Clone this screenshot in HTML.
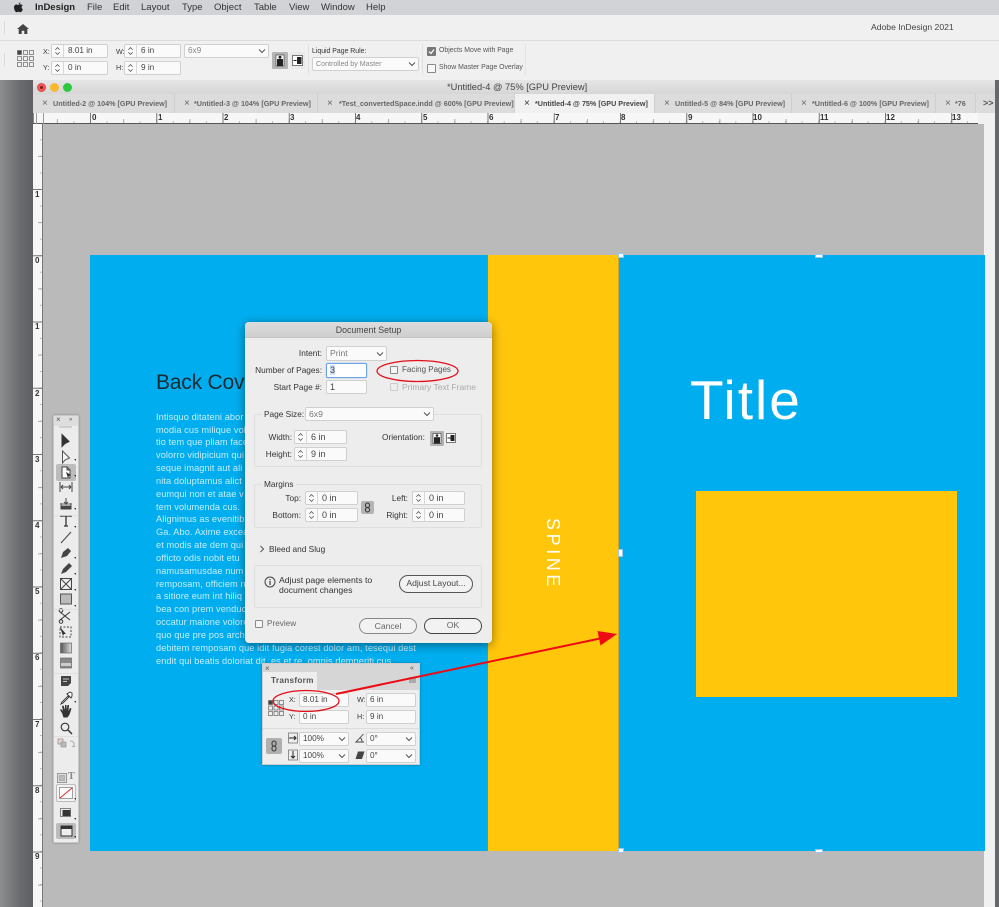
<!DOCTYPE html>
<html><head><meta charset="utf-8"><style>
html,body{margin:0;padding:0;width:999px;height:907px;overflow:hidden;background:#6b6c6f;font-family:"Liberation Sans",sans-serif;color:#333}
div,span,svg{position:absolute;box-sizing:border-box}
.t{white-space:nowrap;font-size:8.2px;line-height:12px;color:#3a3a3a}
.r{text-align:right}
.f{background:#fafafa;border:1px solid #d0d0d0;border-radius:2px;font-size:8.2px;line-height:12px;color:#444;white-space:nowrap;padding-left:3px}
.s{padding-left:16px}
.s svg{left:0;top:0;width:12px;height:100%;border-right:1px solid #d8d8d8}
.d svg{right:2px;top:50%;margin-top:-4px;width:8px;height:8px}
.tab{top:94px;height:19px;background:#dcdcdc;border-right:1px solid #cfcfcf;font-size:7.2px;line-height:19px;color:#666;font-weight:bold;white-space:nowrap;overflow:hidden}
.tab b{position:absolute;left:9px;top:0;font-weight:normal;font-size:10px;color:#666}
.tab i{position:absolute;font-style:normal}
.rl{font-size:8px;font-weight:bold;color:#333;line-height:9px;white-space:nowrap}
.g{border:1px solid #dedede;border-radius:2px}
.dl{font-size:8.3px;line-height:12px;color:#333;white-space:nowrap;font-weight:normal}
.pill{border:1px solid #777;border-radius:9px;background:#f2f2f2;font-size:8.6px;text-align:center;color:#444;white-space:nowrap}
.b{left:156px;font-size:9.2px;line-height:13px;color:#c6edfb;white-space:nowrap;letter-spacing:.1px}
.m{top:2px;font-size:9.5px;color:#333}
</style></head><body>
<svg width="0" height="0" style="position:absolute"><defs>
<symbol id="sp" viewBox="0 0 12 14"><path d="M3.500 5.500 6 3l2.500 2.500M3.500 8.500 6 11l2.500-2.500" fill="none" stroke="#555" stroke-width=".9"/></symbol>
<symbol id="dn" viewBox="0 0 8 8"><path d="M1 2.500 4 5.500l3-3" fill="none" stroke="#555" stroke-width="1"/></symbol>
</defs></svg>

<!-- menu bar -->
<div style="left:0;top:0;width:999px;height:15px;background:#d2d3d6"></div>
<svg style="left:13px;top:2px" width="11" height="11" viewBox="0 0 11 11"><path d="M7.300 0.500C6.200 0.700 5.500 1.600 5.600 2.600 6.700 2.600 7.400 1.600 7.300 .5zM5.500 3C4.700 3 4.300 2.500 3.400 2.500 2 2.500 1 3.800 1 5.500 1 7.700 2.500 10.300 3.600 10.300 4.300 10.300 4.600 9.800 5.500 9.800S6.700 10.300 7.400 10.300C8.300 10.300 9.500 8.500 9.900 7.300 8.300 6.600 8.200 4.200 9.700 3.400 9.100 2.700 8.300 2.400 7.600 2.400 6.700 2.400 6.100 3 5.500 3z" fill="#222"/></svg>
<div class="t" style="left:35px;top:2px;font-size:9.500px;font-weight:bold;color:#222">InDesign</div>
<div class="t m" style="left:87px">File</div>
<div class="t m" style="left:113px">Edit</div>
<div class="t m" style="left:141px">Layout</div>
<div class="t m" style="left:182px">Type</div>
<div class="t m" style="left:214px">Object</div>
<div class="t m" style="left:254px">Table</div>
<div class="t m" style="left:289px">View</div>
<div class="t m" style="left:321px">Window</div>
<div class="t m" style="left:366px">Help</div>

<!-- home bar -->
<div style="left:0;top:15px;width:999px;height:65px;background:#f0f0f0"></div>
<div style="left:0;top:40px;width:999px;height:1px;background:#dcdcdc"></div>
<div style="left:4px;top:21px;width:1px;height:13px;background:#d8d8d8"></div>
<svg style="left:17px;top:24px" width="12" height="10" viewBox="0 0 12 10"><path d="M6 0 0 5h1.700v5h3V6.800h2.600V10h3V5H12z" fill="#444"/></svg>
<div class="t" style="left:871px;top:21px;font-size:8.600px;color:#444">Adobe InDesign 2021</div>

<!-- control bar -->
<div style="left:4px;top:53px;width:1px;height:13px;background:#d8d8d8"></div>
<svg style="left:17px;top:50px" width="18" height="18" viewBox="0 0 18 18" fill="none" stroke="#666" stroke-width=".7"><rect x=".5" y=".5" width="4" height="4" fill="#444"/><rect x="6.500" y=".5" width="4" height="4"/><rect x="12.500" y=".5" width="4" height="4"/><rect x=".5" y="6.500" width="4" height="4"/><rect x="6.500" y="6.500" width="4" height="4"/><rect x="12.500" y="6.500" width="4" height="4"/><rect x=".5" y="12.500" width="4" height="4"/><rect x="6.500" y="12.500" width="4" height="4"/><rect x="12.500" y="12.500" width="4" height="4"/></svg>
<div class="t" style="left:43px;top:46px;font-size:7.200px">X:</div>
<div class="t" style="left:43px;top:62px;font-size:7.200px">Y:</div>
<div class="t" style="left:116px;top:46px;font-size:7.200px">W:</div>
<div class="t" style="left:116px;top:62px;font-size:7.200px">H:</div>
<div class="f s" style="left:51px;top:44px;width:57px;height:14px">8.01 in<svg><use href="#sp"/></svg></div>
<div class="f s" style="left:51px;top:61px;width:57px;height:14px">0 in<svg><use href="#sp"/></svg></div>
<div class="f s" style="left:124px;top:44px;width:57px;height:14px">6 in<svg><use href="#sp"/></svg></div>
<div class="f s" style="left:124px;top:61px;width:57px;height:14px">9 in<svg><use href="#sp"/></svg></div>
<div class="f d" style="left:184px;top:44px;width:85px;height:14px;color:#888">6x9<svg><use href="#dn"/></svg></div>
<div style="left:272px;top:52px;width:16px;height:17px;background:#b4b4b4;border-radius:1px"></div>
<svg style="left:275px;top:54px" width="10" height="13" viewBox="0 0 10 13"><rect x="1" y="1" width="8" height="11" fill="#fff" stroke="#333" stroke-width=".6"/><circle cx="5" cy="3.200" r="1.500" fill="#222"/><rect x="2" y="5" width="6" height="7" fill="#222"/></svg>
<div style="left:290px;top:52px;width:15px;height:17px;background:#eaeaea"></div>
<svg style="left:292px;top:55px" width="11" height="11" viewBox="0 0 11 11"><rect x=".5" y=".5" width="10" height="10" fill="#fff" stroke="#444" stroke-width=".7"/><rect x="5" y="2" width="4.500" height="7" fill="#222"/><path d="M1.500 5.500h3" stroke="#222"/></svg>
<div style="left:308px;top:44px;width:1px;height:31px;background:#e2e2e2"></div>
<div class="t" style="left:312px;top:46px;font-size:6.900px;color:#333">Liquid Page Rule:</div>
<div class="f d" style="left:312px;top:57px;width:107px;height:14px;color:#888;font-size:7.100px">Controlled by Master<svg><use href="#dn"/></svg></div>
<div style="left:422px;top:44px;width:1px;height:31px;background:#e2e2e2"></div>
<div style="left:427px;top:47px;width:9px;height:9px;background:#777;border-radius:1px"></div>
<svg style="left:428px;top:48px" width="7" height="7" viewBox="0 0 7 7"><path d="M1 3.500 3 5.500 6 1.500" fill="none" stroke="#fff" stroke-width="1.200"/></svg>
<div class="t" style="left:439px;top:45px;font-size:6.900px;color:#555">Objects Move with Page</div>
<div style="left:427px;top:64px;width:9px;height:9px;background:#f8f8f8;border:1px solid #888;border-radius:1px"></div>
<div class="t" style="left:439px;top:62px;font-size:6.900px;color:#555">Show Master Page Overlay</div>
<div style="left:525px;top:44px;width:1px;height:31px;background:#e2e2e2"></div>

<!-- left dark desktop + window -->
<div style="left:0;top:80px;width:33px;height:827px;background:linear-gradient(90deg,#8d8e90,#6a6b6e 60%,#5f6063)"></div>
<div style="left:995px;top:80px;width:4px;height:827px;background:#67686b"></div>
<div style="left:33px;top:80px;width:962px;height:14px;background:linear-gradient(#e6e6e6,#d6d6d6)"></div>
<div style="left:37px;top:83px;width:9px;height:9px;border-radius:50%;background:#f4575a;border:1px solid #d84a48"></div>
<div style="left:40px;top:86px;width:3px;height:3px;border-radius:50%;background:#7a1e1c"></div>
<div style="left:50px;top:83px;width:9px;height:9px;border-radius:50%;background:#f9b92e"></div>
<div style="left:63px;top:83px;width:9px;height:9px;border-radius:50%;background:#2bc840"></div>
<div class="t" style="left:447px;top:81px;font-size:9.300px;color:#444">*Untitled-4 @ 75% [GPU Preview]</div>

<!-- tabs -->
<div style="left:33px;top:94px;width:962px;height:19px;background:#dcdcdc"></div>
<div class="tab" style="left:33px;width:142px"><b>×</b><i style="left:20px">Untitled-2 @ 104% [GPU Preview]</i></div>
<div class="tab" style="left:175px;width:143px"><b style="left:9px">×</b><i style="left:19px">*Untitled-3 @ 104% [GPU Preview]</i></div>
<div class="tab" style="left:318px;width:197px"><b>×</b><i style="left:21px">*Test_convertedSpace.indd @ 600% [GPU Preview]</i></div>
<div class="tab" style="left:515px;width:140px;background:#f1f1f1;color:#444"><b style="color:#333">×</b><i style="left:20px">*Untitled-4 @ 75% [GPU Preview]</i></div>
<div class="tab" style="left:655px;width:137px"><b>×</b><i style="left:20px">Untitled-5 @ 84% [GPU Preview]</i></div>
<div class="tab" style="left:792px;width:144px"><b>×</b><i style="left:20px">*Untitled-6 @ 100% [GPU Preview]</i></div>
<div class="tab" style="left:936px;width:40px"><b>×</b><i style="left:19px">*76</i></div>
<div class="t" style="left:983px;top:97px;font-size:9px;font-weight:bold;color:#555">&gt;&gt;</div>

<!-- rulers -->
<div style="left:33px;top:113px;width:962px;height:794px;background:#f1f1f1"></div>
<div style="left:33px;top:113px;width:945px;height:11px;background:#f7f7f7;border-bottom:1px solid #555"></div>
<div style="left:43px;top:113px;width:935px;height:10px;background-image:linear-gradient(90deg,#777 1px,transparent 1px),linear-gradient(90deg,#aaa 1px,transparent 1px),linear-gradient(90deg,#bbb 1px,transparent 1px);background-size:66.25px 10px,33.125px 4px,16.562px 2px;background-position:47px 0,47px 100%,47px 100%;background-repeat:repeat-x"></div>
<div style="left:33px;top:113px;width:1px;height:10px;background:#888"></div>
<div style="left:36px;top:113px;width:1px;height:11px;background:#999"></div>
<div style="left:43px;top:113px;width:1px;height:11px;background:#999"></div>
<div class="rl" style="left:92px;top:113px">0</div>
<div class="rl" style="left:158px;top:113px">1</div>
<div class="rl" style="left:224px;top:113px">2</div>
<div class="rl" style="left:290px;top:113px">3</div>
<div class="rl" style="left:356px;top:113px">4</div>
<div class="rl" style="left:423px;top:113px">5</div>
<div class="rl" style="left:489px;top:113px">6</div>
<div class="rl" style="left:555px;top:113px">7</div>
<div class="rl" style="left:621px;top:113px">8</div>
<div class="rl" style="left:688px;top:113px">9</div>
<div class="rl" style="left:753px;top:113px">10</div>
<div class="rl" style="left:820px;top:113px">11</div>
<div class="rl" style="left:886px;top:113px">12</div>
<div class="rl" style="left:952px;top:113px">13</div>
<div style="left:33px;top:124px;width:10px;height:783px;background-color:#f7f7f7;border-right:1px solid #777;background-image:linear-gradient(#777 1px,transparent 1px),linear-gradient(#aaa 1px,transparent 1px),linear-gradient(#bbb 1px,transparent 1px);background-size:10px 66.25px,4px 33.125px,2px 16.562px;background-position:0 65px,100% 65px,100% 65px;background-repeat:repeat-y"></div>
<div class="rl" style="left:35px;top:190px">1</div>
<div class="rl" style="left:35px;top:256px">0</div>
<div class="rl" style="left:35px;top:322px">1</div>
<div class="rl" style="left:35px;top:389px">2</div>
<div class="rl" style="left:35px;top:455px">3</div>
<div class="rl" style="left:35px;top:521px">4</div>
<div class="rl" style="left:35px;top:587px">5</div>
<div class="rl" style="left:35px;top:653px">6</div>
<div class="rl" style="left:35px;top:720px">7</div>
<div class="rl" style="left:35px;top:786px">8</div>
<div class="rl" style="left:35px;top:852px">9</div>

<!-- canvas -->
<div style="left:43px;top:124px;width:941px;height:783px;background:#bababa"></div>
<div style="left:90px;top:255px;width:895px;height:596px;background:#00aeef"></div>
<div style="left:487px;top:255px;width:132px;height:596px;background:#ffc60b;border-left:1px solid #a08a30;border-right:1px solid #d8a520"></div>
<div style="left:696px;top:491px;width:261px;height:206px;background:#ffc60b"></div>
<div class="t" style="left:690px;top:368px;font-size:55px;line-height:64px;color:#fff;letter-spacing:2px">Title</div>
<div class="t" style="left:510px;top:545px;width:86px;text-align:center;transform:rotate(90deg);font-size:18px;line-height:18px;color:#fff;letter-spacing:3.600px">SPINE</div>
<div class="t" style="left:156px;top:369px;font-size:21px;line-height:28px;color:#1d2a33;letter-spacing:-.2px">Back Cover</div>
<div class="b" style="top:411px">Intisquo ditateni abor</div>
<div class="b" style="top:424px">modia cus milique vol</div>
<div class="b" style="top:436px">tio tem que pliam face</div>
<div class="b" style="top:449px">volorro vidipicium qui</div>
<div class="b" style="top:462px">seque imagnit aut ali</div>
<div class="b" style="top:475px">nita doluptamus alict</div>
<div class="b" style="top:488px">eumqui non et atae v</div>
<div class="b" style="top:501px">tem volumenda cus.</div>
<div class="b" style="top:513px">Alignimus as evenitibu</div>
<div class="b" style="top:526px">Ga. Abo. Axime excea</div>
<div class="b" style="top:539px">et modis ate dem qui</div>
<div class="b" style="top:552px">officto odis nobit etu</div>
<div class="b" style="top:565px">namusamusdae num</div>
<div class="b" style="top:578px">remposam, officiem n</div>
<div class="b" style="top:590px">a sitiore eum int hiliq</div>
<div class="b" style="top:603px">bea con prem venduc</div>
<div class="b" style="top:616px">occatur maione volore</div>
<div class="b" style="top:629px">quo que pre pos archi</div>
<div class="b" style="top:642px">debitem remposam que idit fugia corest dolor am, tesequi dest</div>
<div class="b" style="top:655px">endit qui beatis doloriat dit, es et re, omnis demperiti cus.</div>

<!-- handles -->
<div style="left:618px;top:253px;width:6px;height:5px;background:#fff;border:1px solid #9cc8e8"></div>
<div style="left:815px;top:254px;width:8px;height:4px;background:#fff;border:1px solid #9cc8e8"></div>
<div style="left:618px;top:549px;width:5px;height:8px;background:#fff;border:1px solid #9cc8e8"></div>
<div style="left:618px;top:848px;width:6px;height:5px;background:#fff;border:1px solid #9cc8e8"></div>
<div style="left:815px;top:849px;width:8px;height:4px;background:#fff;border:1px solid #9cc8e8"></div>

<!-- tools panel -->
<div style="left:53px;top:415px;width:26px;height:428px;background:#ececec;border:1px solid #c8c8c8;border-radius:2px;box-shadow:0 0 2px rgba(0,0,0,.3)"></div>
<div style="left:54px;top:416px;width:24px;height:10px;background:#dedede"></div>
<div class="t" style="left:56px;top:414px;font-size:8px;color:#555">×</div>
<div class="t" style="left:69px;top:414px;font-size:6px;color:#555">»</div>
<div style="left:59px;top:426px;width:13px;height:2px;background:#cfcfcf"></div>
<div style="left:56px;top:464px;width:20px;height:17px;background:#bcbcbc;border-radius:2px"></div>
<div style="left:56px;top:784px;width:20px;height:18px;background:#f4f4f4;border:1px solid #bbb;border-radius:2px"></div>
<div style="left:56px;top:823px;width:20px;height:16px;background:#bcbcbc;border-radius:2px"></div>
<svg style="left:53px;top:415px" width="26" height="428" viewBox="53 415 26 428" fill="none" stroke="#333" stroke-width="1">
<path d="M62 435v12l3-3 4-2z" fill="#333" transform="translate(0 -.5)"/><path d="M62.500 451v12l2.500-3 4.500-2z" fill="#f4f4f4" stroke="#555"/>
<path d="M62 467h5l3 3v8h-8zM67 467v3h3" fill="#fff" stroke="#444"/><path d="M66 472l5 3-2 1-1 2z" fill="#333" stroke="none"/>
<path d="M60 482v10M72 482v10M61 487h10M61 487l2-2M61 487l2 2M71 487l-2-2M71 487l-2 2" stroke="#444"/>
<path d="M61 503v6h10v-6" fill="#aaa" stroke="#444"/><path d="M66 498v6M64 502l2 2 2-2" stroke="#444"/><rect x="61" y="506" width="10" height="3" fill="#444" stroke="none"/>
<path d="M61 517v-1h10v1M66 516v10M64 526h4" stroke="#333" stroke-width="1.300"/>
<path d="M61 543 71 532" stroke="#444"/>
<path d="M61 558l2-6 5-4 3 3-4 5z" fill="#444" stroke="none"/>
<path d="M61 574l2-5 6-6 3 3-6 6z" fill="#444" stroke="none"/>
<rect x="60.500" y="578.500" width="11" height="11" fill="#eee" stroke="#444"/><path d="M60.500 578.500l11 11M71.500 578.500l-11 11" stroke="#444"/>
<rect x="60.500" y="594" width="11" height="10" fill="#bbb" stroke="#555"/>
<path d="M60 612l10 8M60 620l10-8" stroke="#333"/><circle cx="61" cy="610.500" r="1.800"/><circle cx="61" cy="621.500" r="1.800"/>
<rect x="60" y="627" width="11" height="10" stroke-dasharray="2 1.500" stroke="#444"/><path d="M60 627l6 7-2 0-1 2z" fill="#333" stroke="none"/>
<rect x="60.500" y="643" width="11" height="10" fill="url(#gr)" stroke="#666" stroke-width=".7"/>
<rect x="60.500" y="658" width="11" height="10" fill="#888" stroke="#666" stroke-width=".7"/><rect x="61" y="663" width="10" height="3" fill="#ccc" stroke="none"/>
<path d="M61 676h10v7l-3 3h-7z" fill="#444" stroke="none"/><path d="M63 679h6M63 681.500h4" stroke="#eee" stroke-width=".8"/>
<path d="M62 702l-1 2 2-1 6-6-1-1zM67 694l4 4 1-2 0-3-2-1z" fill="#fff" stroke="#333" stroke-width=".9"/>
<path d="M62 713l-2-3 1-1 2 2-1-5 1.500-.5L65 710v-5h1.500v5l1-5H69l-.5 6 1.500-3 1.500.5-2 6-2 3h-4z" fill="#333" stroke="none"/>
<circle cx="65" cy="727" r="3.800" stroke="#333" stroke-width="1.100"/><path d="M68 730l4 4" stroke="#333" stroke-width="1.500"/>
<rect x="58" y="739" width="5" height="5" fill="#ddd" stroke="#a66" stroke-width=".6"/><rect x="61" y="742" width="5" height="5" fill="#bbb" stroke="#888" stroke-width=".6"/>
<path d="M70 741h2l2 2v3M72 747l2-1 1 1" stroke="#999" stroke-width=".8"/>
<rect x="57.500" y="773.500" width="9" height="9" fill="#ddd" stroke="#999"/><rect x="59.500" y="775.500" width="5" height="5" fill="#bbb" stroke="#999" stroke-width=".6"/>
<rect x="59.500" y="787.500" width="13" height="11" fill="#fff" stroke="#888" stroke-width=".8"/><path d="M60 798l12-10" stroke="#e03030" stroke-width="1.100"/>
<rect x="62.500" y="810" width="8" height="6" fill="#333" stroke="none"/><rect x="60.500" y="808.500" width="10" height="8" stroke="#555" stroke-width=".7"/>
<rect x="61" y="826" width="11" height="10" fill="#eee" stroke="#333"/><rect x="61" y="826" width="11" height="3" fill="#333" stroke="none"/>
<defs><linearGradient id="gr"><stop offset="0" stop-color="#555"/><stop offset="1" stop-color="#ddd"/></linearGradient></defs>
<path d="M76 461v-2h-2zM76 477v-2h-2zM76 510v-2h-2zM76 528v-2h-2zM76 559v-2h-2zM76 575v-2h-2zM76 591v-2h-2zM76 607v-2h-2zM76 703v-2h-2zM76 800v-2h-2zM76 820v-2h-2zM76 838v-2h-2z" fill="#333" stroke="none"/>
<path d="M54 515.500h24M54 609.500h24M54 673.500h24M54 736.500h24" stroke="#dcdcdc" stroke-width=".7"/>
</svg>
<div class="t" style="left:68px;top:771px;font-family:'Liberation Serif',serif;font-size:10px;font-weight:bold;color:#888">T</div>

<!-- Document Setup dialog -->
<div style="left:245px;top:322px;width:247px;height:321px;background:#ededed;border-radius:4px;box-shadow:0 2px 10px rgba(0,0,0,.45)"></div>
<div style="left:245px;top:322px;width:247px;height:16px;background:linear-gradient(#dcdcdc,#cfcfcf);border-radius:4px 4px 0 0;border-bottom:1px solid #c4c4c4"></div>
<div class="dl" style="left:245px;top:324px;width:247px;text-align:center;color:#444;font-size:8.800px">Document Setup</div>
<div class="dl r" style="left:245px;top:347px;width:77px">Intent:</div>
<div class="f d" style="left:326px;top:346px;width:61px;height:15px;color:#777;line-height:13px;font-size:8.600px">Print<svg><use href="#dn"/></svg></div>
<div class="dl r" style="left:245px;top:364px;width:77px">Number of Pages:</div>
<div class="f" style="left:326px;top:363px;width:41px;height:15px;background:#fff;border:1px solid #6aa5e8;box-shadow:0 0 1px #6aa5e8;line-height:13px;font-size:9px"><span style="position:static;background:#cfe0f7">3</span></div>
<div class="dl r" style="left:245px;top:381px;width:77px">Start Page #:</div>
<div class="f" style="left:326px;top:380px;width:41px;height:14px;line-height:12px;font-size:9px">1</div>
<div style="left:390px;top:366px;width:8px;height:8px;background:#f6f6f6;border:1px solid #888;border-radius:1px"></div>
<div class="dl" style="left:402px;top:364px;color:#555;font-size:8px">Facing Pages</div>
<div style="left:390px;top:383px;width:8px;height:8px;border:1px solid #ccc;border-radius:1px"></div>
<div class="dl" style="left:402px;top:381px;color:#aaa;font-size:8.500px">Primary Text Frame</div>

<div class="g" style="left:254px;top:414px;width:228px;height:53px"></div>
<div style="left:262px;top:410px;width:42px;height:8px;background:#ededed"></div>
<div class="dl" style="left:264px;top:408px">Page Size:</div>
<div class="f d" style="left:305px;top:407px;width:129px;height:14px;color:#777;font-size:8.600px">6x9<svg><use href="#dn"/></svg></div>
<div class="dl r" style="left:255px;top:431px;width:37px">Width:</div>
<div class="f s" style="left:294px;top:430px;width:53px;height:14px;font-size:9px">6 in<svg><use href="#sp"/></svg></div>
<div class="dl r" style="left:255px;top:448px;width:37px">Height:</div>
<div class="f s" style="left:294px;top:447px;width:53px;height:14px;font-size:9px">9 in<svg><use href="#sp"/></svg></div>
<div class="dl" style="left:382px;top:431px">Orientation:</div>
<div style="left:430px;top:431px;width:14px;height:15px;background:#b4b4b4;border-radius:1px"></div>
<svg style="left:432px;top:433px" width="10" height="11" viewBox="0 0 10 11"><rect x="1" y=".5" width="8" height="10" fill="#fff" stroke="#333" stroke-width=".6"/><circle cx="5" cy="2.500" r="1.300" fill="#222"/><rect x="2" y="4.200" width="6" height="6.300" fill="#222"/></svg>
<svg style="left:446px;top:433px" width="10" height="10" viewBox="0 0 10 10"><rect x=".5" y=".5" width="9" height="9" fill="#fff" stroke="#444" stroke-width=".7"/><rect x="4.500" y="2" width="4" height="6" fill="#222"/><path d="M1.500 5h3" stroke="#222"/></svg>

<div class="g" style="left:254px;top:484px;width:228px;height:44px"></div>
<div style="left:262px;top:480px;width:34px;height:8px;background:#ededed"></div>
<div class="dl" style="left:264px;top:478px">Margins</div>
<div class="dl r" style="left:255px;top:492px;width:46px">Top:</div>
<div class="f s" style="left:305px;top:491px;width:53px;height:14px;font-size:9px">0 in<svg><use href="#sp"/></svg></div>
<div class="dl r" style="left:255px;top:509px;width:46px">Bottom:</div>
<div class="f s" style="left:305px;top:508px;width:53px;height:14px;font-size:9px">0 in<svg><use href="#sp"/></svg></div>
<div style="left:361px;top:501px;width:13px;height:13px;background:#b4b4b4;border-radius:2px"></div>
<svg style="left:364px;top:502px" width="7" height="11" viewBox="0 0 7 11" fill="none" stroke="#333"><rect x="1.500" y="1" width="4" height="4.500" rx="2"/><rect x="1.500" y="5.500" width="4" height="4.500" rx="2"/></svg>
<div class="dl r" style="left:375px;top:492px;width:33px">Left:</div>
<div class="f s" style="left:412px;top:491px;width:53px;height:14px;font-size:9px">0 in<svg><use href="#sp"/></svg></div>
<div class="dl r" style="left:375px;top:509px;width:33px">Right:</div>
<div class="f s" style="left:412px;top:508px;width:53px;height:14px;font-size:9px">0 in<svg><use href="#sp"/></svg></div>
<svg style="left:259px;top:545px" width="6" height="8" viewBox="0 0 6 8"><path d="M1.500 1 4.500 4 1.500 7" fill="none" stroke="#555"/></svg>
<div class="dl" style="left:269px;top:543px">Bleed and Slug</div>

<div class="g" style="left:254px;top:565px;width:228px;height:43px"></div>
<svg style="left:264px;top:576px" width="12" height="12" viewBox="0 0 12 12"><circle cx="6" cy="6" r="5" fill="none" stroke="#444"/><rect x="5.400" y="5" width="1.200" height="4" fill="#444"/><rect x="5.400" y="3" width="1.200" height="1.200" fill="#444"/></svg>
<div class="dl" style="left:279px;top:574px;font-size:8.700px">Adjust page elements to</div>
<div class="dl" style="left:279px;top:584px;font-size:8.700px">document changes</div>
<div class="pill" style="left:399px;top:575px;width:74px;height:18px;line-height:15px;border-color:#555">Adjust Layout...</div>
<div style="left:255px;top:620px;width:8px;height:8px;background:#f6f6f6;border:1px solid #888;border-radius:1px"></div>
<div class="dl" style="left:267px;top:618px;color:#666;font-size:8.200px">Preview</div>
<div class="pill" style="left:359px;top:618px;width:58px;height:16px;line-height:14px;color:#666;border-color:#888">Cancel</div>
<div class="pill" style="left:424px;top:618px;width:58px;height:16px;line-height:13px;color:#666;border:1.500px solid #444">OK</div>

<!-- Transform panel -->
<div style="left:262px;top:663px;width:158px;height:102px;background:#eeeeee;border:1px solid #ccc;box-shadow:0 0 3px rgba(0,0,0,.25)"></div>
<div style="left:263px;top:664px;width:156px;height:26px;background:#d6d6d6"></div>
<div style="left:263px;top:672px;width:54px;height:18px;background:#eeeeee"></div>
<div class="t" style="left:271px;top:675px;font-size:8.200px;font-weight:bold;color:#555;letter-spacing:.3px">Transform</div>
<div class="t" style="left:265px;top:663px;font-size:8px;color:#555">×</div>
<div class="t" style="left:410px;top:663px;font-size:7px;color:#555">«</div>
<div style="left:409px;top:677px;width:7px;height:6px;background:#aaa"></div>
<svg style="left:268px;top:700px" width="17" height="17" viewBox="0 0 17 17" fill="none" stroke="#666" stroke-width=".7"><rect x=".5" y=".5" width="4" height="4" fill="#444"/><rect x="6" y=".5" width="4" height="4"/><rect x="11.500" y=".5" width="4" height="4"/><rect x=".5" y="6" width="4" height="4"/><rect x="6" y="6" width="4" height="4"/><rect x="11.500" y="6" width="4" height="4"/><rect x=".5" y="11.500" width="4" height="4"/><rect x="6" y="11.500" width="4" height="4"/><rect x="11.500" y="11.500" width="4" height="4"/></svg>
<div class="t" style="left:289px;top:694px;font-size:7.200px">X:</div>
<div class="t" style="left:289px;top:711px;font-size:7.200px">Y:</div>
<div class="t" style="left:357px;top:694px;font-size:7.200px">W:</div>
<div class="t" style="left:357px;top:711px;font-size:7.200px">H:</div>
<div class="f" style="left:299px;top:693px;width:50px;height:14px">8.01 in</div>
<div class="f" style="left:299px;top:710px;width:50px;height:14px">0 in</div>
<div class="f" style="left:366px;top:693px;width:50px;height:14px">6 in</div>
<div class="f" style="left:366px;top:710px;width:50px;height:14px">9 in</div>
<div style="left:263px;top:728px;width:156px;height:1px;background:#dcdcdc"></div>
<div style="left:266px;top:738px;width:16px;height:16px;background:#b0b0b0;border-radius:2px"></div>
<svg style="left:270px;top:740px" width="8" height="12" viewBox="0 0 8 12" fill="none" stroke="#333"><rect x="2" y="1" width="4" height="5" rx="2"/><rect x="2" y="6" width="4" height="5" rx="2"/></svg>
<svg style="left:288px;top:732px" width="10" height="12" viewBox="0 0 10 12"><rect x=".5" y="1" width="9" height="10" fill="#eee" stroke="#666" stroke-width=".7"/><path d="M1 6h7M6 4l2 2-2 2" fill="none" stroke="#222"/></svg>
<svg style="left:288px;top:749px" width="10" height="12" viewBox="0 0 10 12"><rect x=".5" y="1" width="9" height="10" fill="#eee" stroke="#666" stroke-width=".7"/><path d="M5 2v7M3 7l2 2 2-2" fill="none" stroke="#222"/></svg>
<div class="f d" style="left:299px;top:732px;width:50px;height:14px">100%<svg><use href="#dn"/></svg></div>
<div class="f d" style="left:299px;top:749px;width:50px;height:14px">100%<svg><use href="#dn"/></svg></div>
<svg style="left:355px;top:733px" width="10" height="10" viewBox="0 0 10 10"><path d="M8.500 1 1 9h8M5.500 5c1 .8 1.500 2 1.500 4" fill="none" stroke="#444" stroke-width=".9"/></svg>
<svg style="left:355px;top:750px" width="10" height="10" viewBox="0 0 10 10"><path d="M3 1.500h6.500L7 9H.5z" fill="#444"/></svg>
<div class="f d" style="left:366px;top:732px;width:50px;height:14px">0°<svg><use href="#dn"/></svg></div>
<div class="f d" style="left:366px;top:749px;width:50px;height:14px">0°<svg><use href="#dn"/></svg></div>

<!-- red annotations -->
<svg style="left:0;top:0" width="999" height="907" viewBox="0 0 999 907" fill="none">
<ellipse cx="417.500" cy="371" rx="40.500" ry="10.500" stroke="#e3101c" stroke-width="1.300"/>
<ellipse cx="306" cy="701" rx="33" ry="10.500" stroke="#e3101c" stroke-width="1.300"/>
<path d="M336 694 600 638.500" stroke="#ee0a14" stroke-width="2"/>
<path d="M617 634 597.500 631 600.500 645.500z" fill="#ee0a14"/>
</svg>
</body></html>
